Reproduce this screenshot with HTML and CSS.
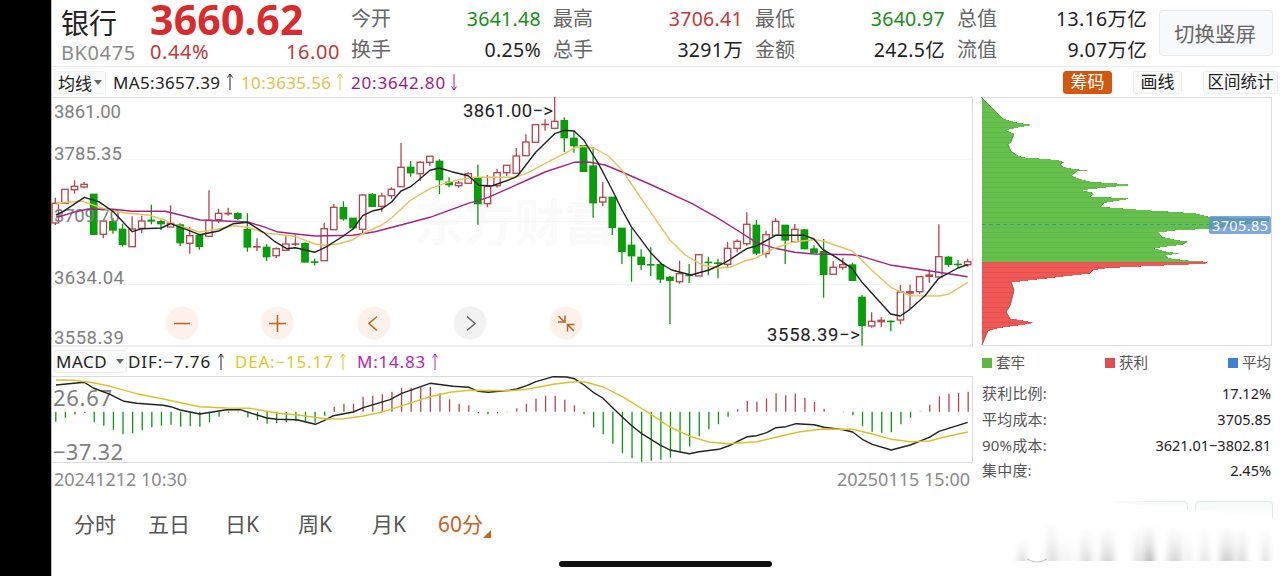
FILE: index.html
```
<!DOCTYPE html>
<html lang="zh-CN">
<head>
<meta charset="utf-8">
<title>银行 BK0475</title>
<link rel="stylesheet" href="styles.css">
</head>
<body>
<div class="app">

<header class="header">
	<div class="name">
		<div class="title">银行</div>
		<div class="code">BK0475</div>
	</div>
	<div class="price">
		<div class="last">3660.62</div>
		<div class="change"><span>0.44%</span><span>16.00</span></div>
	</div>
	<dl class="quotes">
		<div><dt>今开</dt><dd class="down">3641.48</dd></div>
		<div><dt>最高</dt><dd class="up">3706.41</dd></div>
		<div><dt>最低</dt><dd class="down">3640.97</dd></div>
		<div><dt>总值</dt><dd>13.16万亿</dd></div>
		<div><dt>换手</dt><dd>0.25%</dd></div>
		<div><dt>总手</dt><dd>3291万</dd></div>
		<div><dt>金额</dt><dd>242.5亿</dd></div>
		<div><dt>流值</dt><dd>9.07万亿</dd></div>
	</dl>
	<button class="rotate">切换竖屏</button>
</header>

<div class="toolbar">
	<div class="select ma-select">均线<i class="caret"></i></div>
	<div class="ma ma5"><span>MA5:3657.39</span><svg class="arrow" viewBox="0 0 8 18"><path d="M4 17V1M1.500 4.500L4 1L6.500 4.500"/></svg></div>
	<div class="ma ma10"><span>10:3635.56</span><svg class="arrow" viewBox="0 0 8 18"><path d="M4 17V1M1.500 4.500L4 1L6.500 4.500"/></svg></div>
	<div class="ma ma20"><span>20:3642.80</span><svg class="arrow" viewBox="0 0 8 18"><path d="M4 1V17M1.500 13.500L4 17L6.500 13.500"/></svg></div>
	<div class="tools">
		<button class="tool on">筹码</button>
		<button class="tool">画线</button>
		<button class="tool wide">区间统计</button>
	</div>
</div>

<div class="content">
	<div class="charts">
		<svg id="kline" class="kline" viewBox="52 96 922 251">
			<text class="watermark" x="414" y="241">东方财富</text>
			<path class="grid" d="M52 159.500H972M52 221.500H972M52 284.500H972"/>
			<path class="frame" d="M52 97.500H972.500V346H52"/>
			<g id="candles"></g>
			<g class="axis">
				<text x="54" y="117.500" textLength="67">3861.00</text>
				<text x="54" y="159.500" textLength="68">3785.35</text>
				<text x="54" y="221.500" textLength="66">3709.70</text>
				<text x="54" y="283.500" textLength="70">3634.04</text>
				<text x="54" y="343.500" textLength="70">3558.39</text>
			</g>
			<g id="averages"></g>
			<g class="mark">
				<text x="463" y="116.500" textLength="90">3861.00−&gt;</text>
				<text x="767" y="341" textLength="93">3558.39−&gt;</text>
			</g>
			<g class="ctl">
				<circle cx="182" cy="323" r="16.500"/><path d="M174 323.500h16"/>
				<circle cx="277.500" cy="323" r="16.500"/><path d="M269 323.500h17M277.500 315v17"/>
				<circle cx="374" cy="323" r="16.500"/><path d="M377 316.500l-8 7l8 7"/>
				<g class="off"><circle cx="470" cy="323" r="16.500"/><path d="M467 316.500l8 7l-8 7"/></g>
				<circle cx="566" cy="323" r="16.500"/><path d="M558.500 316l6 6M565 315.500v6.500h-7M574 331l-6-6M567.500 331.500v-7h7"/>
			</g>
		</svg>
		<div class="macd-bar">
			<div class="select macd-select">MACD<i class="caret"></i></div>
			<div class="ma dif"><span>DIF:−7.76</span><svg class="arrow" viewBox="0 0 8 18"><path d="M4 17V1M1.500 4.500L4 1L6.500 4.500"/></svg></div>
			<div class="ma dea"><span>DEA:−15.17</span><svg class="arrow" viewBox="0 0 8 18"><path d="M4 17V1M1.500 4.500L4 1L6.500 4.500"/></svg></div>
			<div class="ma m"><span>M:14.83</span><svg class="arrow" viewBox="0 0 8 18"><path d="M4 17V1M1.500 4.500L4 1L6.500 4.500"/></svg></div>
		</div>
		<svg id="macd" class="macd" viewBox="52 376 922 88">
			<path class="frame" d="M52 376.500H972.500V462.500H52"/>
			<g id="bars"></g>
			<g class="axis big">
				<text x="53" y="405.500" textLength="59">26.67</text>
				<text x="53" y="459.500" textLength="70">−37.32</text>
			</g>
			<g id="signals"></g>
		</svg>
		<div class="dates"><span>20241212 10:30</span><span>20250115 15:00</span></div>
	</div>

	<aside class="chips">
		<svg class="dist" viewBox="982 96 290 251">
			<path class="frame" d="M982 97.500H1271.500V345.500H982"/>
			<g id="dist"></g>
			<path class="avg" d="M982 224.500H1209"/>
			<rect class="tag" x="1209" y="216" width="62" height="18" rx="2"/>
			<text class="tagtext" x="1212" y="230.500" textLength="56">3705.85</text>
		</svg>
		<div class="legend">
			<span><i class="green"></i>套牢</span>
			<span><i class="red"></i>获利</span>
			<span><i class="blue"></i>平均</span>
		</div>
		<dl class="stats">
			<div><dt>获利比例:</dt><dd>17.12%</dd></div>
			<div><dt>平均成本:</dt><dd>3705.85</dd></div>
			<div><dt>90%成本:</dt><dd>3621.01−3802.81</dd></div>
			<div><dt>集中度:</dt><dd>2.45%</dd></div>
		</dl>
	</aside>
</div>

<footer class="footer">
	<nav class="tabs">
		<a>分时</a><a>五日</a><a>日K</a><a>周K</a><a>月K</a><a class="on">60分<i></i></a>
	</nav>
	<svg class="smudge" viewBox="1010 496 270 76">
		<defs>
			<filter id="soft" x="-60%" y="-20%" width="220%" height="140%"><feGaussianBlur stdDeviation="3 0.7"/></filter>
			<linearGradient id="fade" x1="0" y1="0" x2="0" y2="1">
				<stop offset="0" stop-color="#777" stop-opacity="0.02"/>
				<stop offset="0.5" stop-color="#777" stop-opacity="0.2"/>
				<stop offset="1" stop-color="#777" stop-opacity="0.5"/>
			</linearGradient>
			<linearGradient id="btn" x1="0" y1="0" x2="1" y2="0">
				<stop offset="0" stop-color="#e4e8e8" stop-opacity="0"/>
				<stop offset="1" stop-color="#e4e8e8"/>
			</linearGradient>
			<linearGradient id="btnfill" x1="0" y1="0" x2="0" y2="1">
				<stop offset="0" stop-color="#f6f9f9"/>
				<stop offset="1" stop-color="#fff"/>
			</linearGradient>
		</defs>
		<path fill="url(#btnfill)" stroke="url(#btn)" d="M1110 501.500H1184Q1187.500 501.500 1187.500 505V510"/>
		<path fill="url(#btnfill)" stroke="#e4e8e8" d="M1195.500 510V505Q1195.500 501.500 1199 501.500H1269Q1272.500 501.500 1272.500 505V518"/>
		<g id="smears"></g>
		<path fill="none" stroke="#888" stroke-opacity=".5" d="M1027 559q10 6 20 0"/>
	</svg>
	<div class="home"></div>
</footer>

</div>
<script src="chart.js"></script>
</body>
</html>
```
FILE: styles.css
```
* {
	box-sizing: border-box;
}
body {
	margin: 0px;
	background: #000;
	font-family: "Noto Sans", "Noto Sans CJK SC", sans-serif;
	color: #222;
	overflow: hidden;
}
dl, dd {
	margin: 0px;
}
button {
	font-family: inherit;
	padding: 0px;
}
svg {
	overflow: visible;
}
.app {
	margin-left: 51px;
	height: 576px;
	background: #fff;
	border-left: 1px solid #bbb;
}

/* quote header */
.header {
	display: flex;
	height: 67px;
	border-bottom: 1px solid #ececec;
}
.name {
	width: 98px;
	padding-left: 9px;
}
.title {
	margin-top: 5px;
	height: 36px;
	line-height: 36px;
	font-size: 28px;
}
.code {
	font-size: 20px;
	line-height: 24px;
	color: #8a8a8a;
	letter-spacing: 0.6px;
}
.price {
	width: 201px;
	color: #c4373b;
}
.last {
	height: 40px;
	line-height: 38px;
	font-size: 41px;
	font-weight: bold;
	letter-spacing: 0.2px;
	color: #dc2a2c;
}
.change {
	display: flex;
	justify-content: space-between;
	width: 190px;
	font-size: 20px;
	line-height: 24px;
	letter-spacing: 0.6px;
}
.quotes {
	display: grid;
	grid-template-columns: repeat(4, 190px);
	column-gap: 12px;
	grid-template-rows: 31px 31px;
	padding-top: 3px;
	font-size: 20px;
	line-height: 31px;
}
.quotes div {
	display: flex;
	justify-content: space-between;
}
.quotes dt {
	color: #666;
}
.quotes dd {
	font-size: 19.5px;
	letter-spacing: 0.3px;
}
.quotes .up {
	color: #c4373b;
}
.quotes .down {
	color: #169016;
}
.rotate {
	width: 114px;
	height: 46px;
	margin: 10px 0 0 12px;
	padding-right: 2px;
	border: 1px solid #e6eaec;
	border-radius: 4px;
	background: #f7f9fa;
	font-size: 20.5px;
	color: #666;
}

/* indicator bar */
.toolbar {
	display: flex;
	align-items: center;
	height: 29px;
	padding: 1px 2px 0;
}
.select {
	display: flex;
	align-items: center;
	justify-content: space-between;
	height: 23px;
	border: 1px solid #eee;
	border-radius: 3px;
	background: #fafbfb;
	font-size: 17px;
	padding: 0 3px;
}
.ma-select {
	width: 52px;
	margin-right: 7px;
}
.caret {
	border: 4px solid transparent;
	border-top: 5px solid #666;
	border-bottom: 0;
}
.ma {
	display: flex;
	align-items: center;
	justify-content: space-between;
	font-size: 17px;
	letter-spacing: 0.35px;
	white-space: nowrap;
}
.arrow {
	width: 8px;
	height: 18px;
	fill: none;
	stroke: currentColor;
	stroke-width: 1;
}
.ma5 {
	width: 121px;
	margin-right: 7px;
}
.ma10 {
	width: 103px;
	margin-right: 7px;
	color: #e3c04c;
}
.ma20 {
	width: 107px;
	color: #a0188c;
	letter-spacing: 0.8px;
}
.tools {
	display: flex;
	gap: 21px;
	margin-left: auto;
}
.tool {
	width: 49px;
	height: 23px;
	border: 1px solid #eceeee;
	border-radius: 3px;
	background: #fafbfb;
	font-size: 17px;
	line-height: 20px;
	color: #222;
}
.tool.wide {
	width: 75px;
	font-size: 16.5px;
}
.tool.on {
	background: #d2580f;
	border-color: #d2580f;
	color: #fff;
}

/* charts */
.content {
	display: flex;
	gap: 8px;
	height: 400px;
}
.charts {
	width: 922px;
}
.kline {
	display: block;
	width: 922px;
	height: 251px;
}
.frame {
	fill: none;
	stroke: #dcdcdc;
}
.grid {
	stroke: #f5f5f5;
}
.watermark {
	font-size: 50px;
	font-weight: bold;
	fill: #fafafa;
}
.axis, .mark {
	font-family: Roboto, sans-serif;
	font-size: 18.5px;
	fill: #808080;
}
.axis.big {
	font-family: "Noto Sans", sans-serif;
	font-size: 22px;
}
.mark {
	fill: #222;
}
.ctl circle {
	fill: #fdf1ea;
	stroke: none;
}
.ctl path {
	fill: none;
	stroke: #c0601c;
	stroke-width: 1.5;
}
.ctl .off circle {
	fill: #f2f2f2;
}
.ctl .off path {
	stroke: #666;
}
.up {
	fill: #fff;
	stroke: #b4444c;
	stroke-width: 1.3;
}
.down {
	fill: #08a008;
	stroke: #08980c;
	stroke-width: 1.3;
}
.line {
	fill: none;
	stroke-width: 1.4;
	stroke-linejoin: round;
}
.line.black {
	stroke: #222;
}
.line.yellow {
	stroke: #e8c25a;
}
.line.gold {
	stroke: #dcc02c;
}
.line.purple {
	stroke: #a42484;
}
.macd-bar {
	display: flex;
	align-items: center;
	height: 29px;
	padding-left: 2px;
}
.macd-select {
	width: 73px;
	margin-right: 1px;
	padding: 0 2px 0 1px;
	letter-spacing: 0.5px;
}
.dif {
	width: 97px;
	margin-right: 10px;
	letter-spacing: 0.9px;
}
.dea {
	width: 112px;
	margin-right: 10px;
	color: #dfc71f;
	letter-spacing: 0.8px;
}
.m {
	width: 82px;
	color: #b428b4;
	letter-spacing: 0.8px;
}
.macd {
	display: block;
	width: 922px;
	height: 88px;
}
.dates {
	display: flex;
	justify-content: space-between;
	padding: 3px 4px 0 2px;
	font-size: 18px;
	line-height: 25px;
	color: #8a8a8a;
}

/* cost distribution */
.chips {
	width: 290px;
}
.dist {
	display: block;
	width: 290px;
	height: 251px;
}
.avg {
	stroke: #3c9a8c;
	stroke-dasharray: 4 3;
}
.tag {
	fill: #5b8fd6;
	fill-opacity: 0.78;
}
.tagtext {
	font-size: 14.5px;
	fill: #fff;
}
.legend {
	display: flex;
	justify-content: space-between;
	height: 31px;
	line-height: 31px;
	padding-right: 1px;
	font-size: 14.5px;
	color: #555;
}
.legend i {
	display: inline-block;
	width: 10px;
	height: 10px;
	margin-right: 4px;
}
.legend .green {
	background: #5cb840;
}
.legend .red {
	background: #e04c50;
}
.legend .blue {
	background: #3c80d8;
}
.stats {
	padding: 3px 1px 0 0;
	font-size: 15px;
}
.stats div {
	display: flex;
	justify-content: space-between;
	height: 25.8px;
	line-height: 25.8px;
}
.stats dt {
	color: #555;
	letter-spacing: 0.2px;
}
.stats dd {
	font-size: 14.5px;
}

/* period tabs */
.footer {
	position: relative;
	display: flex;
	justify-content: space-between;
	height: 80px;
}
.tabs {
	display: flex;
	padding: 12px 0 0 22px;
	font-size: 21px;
	line-height: 32px;
	color: #555;
}
.tabs a {
	width: 74px;
}
.tabs a:nth-child(2) {
	width: 77px;
}
.tabs a:nth-child(3) {
	width: 73px;
}
.tabs a:nth-child(5) {
	width: 66px;
}
.tabs .on {
	color: #c8641c;
}
.tabs i {
	display: inline-block;
	border-left: 8px solid transparent;
	border-bottom: 8px solid #c8641c;
	vertical-align: -6px;
}
.smudge {
	width: 270px;
	height: 76px;
}
.home {
	position: absolute;
	left: 507px;
	bottom: 9px;
	width: 213px;
	height: 6px;
	border-radius: 3px;
	background: #111;
}
```
FILE: chart.js
```
"use strict";

var get = function(id) {
	return document.getElementById(id);
};
var X0 = 55.3;
var STEP = 9.604;

// r: rise, g: fall / high, body top, body bottom, low
var candles = [
	"r 197.7 203.3 223 225", "r 189.3 189.3 203.3 203.3", "r 180.3 186.3 189.7 193.7", "r 182 184.3 187 188.3",
	"g 194.3 194.3 234.3 234.3", "r 221 221 234.3 238.3", "g 217.7 221.7 230 233.7", "g 223.7 229.3 244.3 246.7",
	"r 216.3 229 246.7 246.7", "r 215.7 221 228.3 233", "g 204.7 220.3 221 224.3", "g 219.7 221.7 223.7 230",
	"r 205.3 223.3 227 227", "g 223.3 225 242.7 246", "r 227 235.7 243.3 253.7", "g 234 235.3 246.3 249.7",
	"r 190.3 220.3 236.3 236.3", "r 208.7 213.3 219.7 223.3", "r 207.7 213.3 213.8 215.7", "g 212.3 213.7 218.3 220.3",
	"g 213.3 229.7 247 251.7", "r 238.3 246.7 247 251", "g 244.3 247.3 256.7 261", "r 247.3 248.7 255.7 258",
	"r 236.3 244 250.3 250.3", "r 235 244 244.3 246", "g 242.3 243.7 262 262", "g 258.7 262 262.3 265.3",
	"r 223 228.7 260.7 260.7", "r 204 207.3 229.7 229.7", "g 201.3 207.7 218.7 220.7", "g 218.3 218.3 227.7 229.7",
	"r 194 195 229.3 233.3", "g 193 194.7 206.3 206.3", "r 192.7 196 206.3 211.7", "r 187.3 189.3 195.7 198.7",
	"r 143 167.3 186.7 186.7", "g 161 167.3 172.7 176.7", "r 161 162.3 173.7 181", "r 156.3 156.3 162.3 166.3",
	"g 159.3 161.3 179.7 194", "g 177.3 182.3 184.7 187.3", "r 181 183 185.7 187.7", "r 172.3 173.7 183.3 183.3",
	"g 164.7 177.7 203.7 224.7", "r 175 186.3 203.7 207.3", "r 168.7 172.7 185.7 187.7", "r 165.3 165.3 172.7 176",
	"r 148 156 173.3 173.3", "r 134.3 142 155.7 155.7", "r 124.7 124.7 142.3 142.3", "r 119.3 124.3 124.6 130.7",
	"r 97 121.3 128.3 128.3", "g 117.3 120.7 137.7 152", "g 130.7 138.3 145.7 152.7", "g 145.7 145.7 171.3 171.3",
	"g 147.3 166 202.7 217.7", "r 182 197.3 202 206", "g 197.3 197.3 227.3 235", "g 228.3 228.3 251.3 264",
	"g 228.3 245.3 255.7 281.7", "g 249.3 257.3 264.3 270", "g 247.3 264.7 265 276", "g 262.7 264.7 279 283",
	"g 276 277.3 280.3 324", "r 260.7 273.7 281.7 283.7", "g 264 275.3 275.6 283", "r 254.7 254.7 276 276",
	"g 256.7 262.3 262.6 275.3", "g 258.7 263 263.3 278.3", "r 241.7 248.3 264.3 267.3", "r 239.3 241.3 248.3 252.3",
	"r 212.3 224.3 243.7 245.7", "g 220 225.3 253 255", "r 230.7 234.7 253.7 257.7", "r 218 221.3 235.3 235.3",
	"g 225.3 225.3 240 264", "r 224 229.3 241.7 241.7", "g 229 230 248.7 248.7", "g 245.3 249 252.7 252.7",
	"g 239 251.7 274.3 297.7", "r 261 267.3 274.3 274.3", "r 258 264.7 267.3 269.7", "g 262.7 265 280.3 280.3",
	"g 295 297.3 325.3 345.7", "r 312.3 321.3 326 327.7", "r 317.3 320.3 321.7 327.3", "g 320.3 321.3 321.6 331.3",
	"r 285 292 320 324.3", "r 284.7 291.7 293 309", "r 276.7 276.7 291.7 293.7", "r 269.3 275 276.3 282.7",
	"r 224.3 256.7 277 277", "g 255.7 257.3 264.3 267", "g 260 264.3 264.6 267.7", "r 258.7 261.7 264.7 266.7"
];

var s = "";
candles.forEach(function(c, i) {
	var a = c.split(" ");
	var x = X0 + i * STEP;
	var high = +a[1], top = +a[2], bottom = +a[3], low = +a[4];
	s += "<g class='" + (a[0] == "r" ? "up" : "down") + "'>";
	s += "<path d='M" + x + " " + high + "V" + top + "M" + x + " " + bottom + "V" + low + "'/>";
	s += "<rect x='" + (x - 3.2) + "' y='" + top + "' width='6.4' height='" + (bottom - top) + "'/></g>";
});
get("candles").innerHTML = s;

var line = function(color, points) {
	return "<polyline class='line " + color + "' points='" + points + "'/>";
};
get("averages").innerHTML =
	line("purple", "56,217 60,216.500 73.3,212.3 88.3,209 113.3,209.3 132.3,211.3 165,211.3 180.3,215 200,220 247.7,222 263.3,226.7 276.7,231.7 298.3,234.3 315,236 353,235.3 375,231.7 401,225 430,217.3 468.3,203.3 487.7,197.7 514.7,185.7 525,181 545,172 574,162.3 588.3,162 605,165 622,172 651.7,185 691.7,203.3 718.3,218.3 744.7,235 756.3,242.3 775,248.3 794.7,252.3 814,254 852.3,254.7 861.7,256.3 891.7,265.3 938.7,272.3 967.7,276.7") +
	line("yellow", "56,204.500 60,203 81.7,201 100,207.3 113.3,211 124,212.7 150,215.3 165,220 170.7,223.3 199.7,232 218.7,229 233.3,225.7 247.7,227.3 266.7,233.3 283.3,235 295,236.3 315,244 326.7,245.3 338.3,243.7 353,239.7 362.7,233.7 381.7,225 391.3,218.3 410.7,200 430,188.7 441.7,184.3 458.3,179.7 475,177.3 514.7,177.3 526.7,173.3 554.7,158.3 565,153.3 574,148 583.7,146.3 595,148.7 608.3,156 622,170 631.3,184 650.7,212.3 670,240 685,255 701.7,264.7 718.3,268 730,267.3 744.7,261 755,258.3 775,248 794.7,241.7 814,239.7 823.3,241 852.3,251 871.7,270 890.7,287.3 910,295.7 938.7,296 948.3,294.3 967.7,282.3") +
	line("black", "56,215 63,211.7 84.3,197.3 98.7,201.7 113.3,211.7 132.3,231.7 142,228.7 161.3,228 170.7,223.7 199.7,234.7 218.7,231 233.3,223.7 247.7,222.3 263.3,232.3 275,241.7 286.7,248.7 295.3,247.7 314.7,252.3 326.7,246.7 343.3,236 353,229 362.7,215.7 373.3,210.7 381.7,209 391.3,202.3 401,191 410.7,186.7 430,170.3 439.3,168 451.7,171.7 468.3,175.7 479,185.3 491.7,186 514.7,177.7 517.7,175.7 535.7,152.3 554.7,133.7 564.3,130.3 574,131 583.7,140 598.3,163.3 612.3,190 622,210 631.3,226.7 650.7,252.7 661.7,264 671.7,270 691,275 709,270 725,262.7 746.7,248.7 756.3,246 775.7,235.3 804.3,235.3 814,239 822.3,249 835,256.7 852.3,268.7 862,282.3 890.7,314 900.3,316 910,309.3 925,295.7 938.7,278.3 958,268 967.7,264.7");

// MACD histogram
var bars = [
	-10, -6, -2.7, -1, -10.5, -14, -18, -22.5, -21.5, -18.5, -15.5, -14, -13, -15, -14.5, -15,
	-10.5, -5, -1, -0.5, -5.5, -8.5, -12, -11.5, -10.5, -9.5, -9.5, -11, -4, 5, 8, 8,
	15, 16, 17.5, 20, 24, 24, 24.5, 25, 18.5, 12.5, 8, 6.5, -1.5, -2.5, -1.5, -0.5,
	3.5, 8, 13, 16, 16, 12, 6.5, -2.5, -15.5, -22.5, -32, -41.5, -46.5, -50, -49, -48,
	-46, -40, -34.5, -24.5, -17.5, -12.5, -5, 2.5, 11, 10, 13.5, 18.5, 16.5, 18, 14, 10,
	3, 0, -0.5, -3.5, -14.5, -20, -21, -20.5, -12.5, -6, 0.5, 7, 15.5, 18, 19, 20
];
get("bars").innerHTML = bars.map(function(v, i) {
	return "<path class='" + (v > 0 ? "up" : "down") + "' d='M" + (X0 + i * STEP + 0.5) + " 411.8v" + (-v) + "'/>";
}).join("");

get("signals").innerHTML =
	line("black", "56,385 84.3,382.3 93.3,388 110,394.3 124,401.3 136.7,403.3 163.3,405.3 170.7,406.7 180.3,410 199.7,414 226.7,409.7 240,409.7 266.7,418 276.7,419.3 296.7,419.7 315.3,424.3 324,420.7 333.3,415.7 353.3,412 363.3,407.7 390,399.7 401.7,393.3 430,383.3 453.3,386.3 469,387.3 478.3,391.3 488.3,392.3 510,390.3 516.7,389 526.7,385.7 536,381.7 553.3,376.7 566.7,377 574.3,378.7 584,385 593.3,392.3 602.7,398 612.7,407.7 622.3,417 632,426 641.3,433.3 660.7,445.3 670,450 689.3,453.7 699,451.7 718.7,449.3 728.3,446 747.3,436.7 756.7,435.7 766.7,432.7 776,427.7 786,426.7 796,423.7 814,424.7 824,427.3 843.3,429.7 852.7,432 862.3,439.3 872.3,444.3 891.3,450 910.3,445 929.3,437.3 939,431.3 967.7,422.3") +
	line("gold", "56,380 73.3,380.3 93.3,382.7 110,386.3 136.7,393.7 163.3,399 199.7,406.7 226.7,408 250,408.3 276.7,413 300,415.3 326.7,419 343.3,418.7 363.3,416 383.3,411.7 403.3,405.3 430,396.7 450,392.3 469,390.3 510,390.7 526.7,389.3 553.3,384.3 574.3,381.7 584,381.7 603.3,387 622.3,396.7 650,413.7 670,427 690,436.3 708.7,442 728.3,443.7 756.7,441.7 776.7,437 800,431.7 823.3,429 852.7,429.3 872.3,434 891.3,439.3 910.3,441.7 929.3,441 943.3,437.3 967.7,432");

// cost distribution: [width, y] turning points, in thirds of a pixel
var green = [[1,16],[59,75],[67,80],[84,85],[109,91],[142,96],[142,100],[117,103],[104,106],[71,113],[87,120],[97,124],[87,150],[79,155],[87,175],[109,190],[129,195],[184,199],[227,203],[246,209],[236,215],[245,224],[279,230],[314,233],[314,235],[284,237],[269,250],[294,260],[327,268],[404,273],[437,276],[437,279],[389,283],[299,293],[329,300],[334,306],[327,312],[387,315],[437,318],[437,320],[399,326],[367,331],[357,343],[409,347],[487,353],[576,358],[641,363],[669,370],[682,373],[740,375],[860,377],[860,388],[760,400],[682,410],[594,412],[529,420],[541,433],[584,443],[615,446],[615,449],[601,457],[544,463],[519,468],[554,478],[589,482],[589,484],[549,488],[559,497],[619,504],[677,508]];
var red = [[677,509],[669,514],[569,518],[454,523],[374,527],[334,533],[324,543],[289,547],[244,552],[194,558],[154,562],[89,570],[97,593],[85,640],[73,658],[85,678],[129,685],[151,690],[151,692],[124,697],[84,702],[49,707],[19,715],[1,757]];
var rows = function(pts, colors, edge) {
	var res = "";
	var k = 0;
	var y0 = Math.round(pts[0][1] / 3);
	for (var y = y0; y * 3 <= pts[pts.length - 1][1]; y++) {
		while (k < pts.length - 2 && pts[k + 1][1] < y * 3) k++;
		var a = pts[k], b = pts[k + 1];
		var t = Math.max(0, Math.min(1, (y * 3 - a[1]) / (b[1] - a[1])));
		var w = (a[0] + (b[0] - a[0]) * t) / 3;
		res += "<rect x='982' y='" + (92 + y) + "' width='" + w.toFixed(1) + "' height='1' fill='" + colors[y % 5 == 0 ? 1 : 0] + "'/>";
		res += "<rect x='" + (982 + w - 1).toFixed(1) + "' y='" + (92 + y) + "' width='1' height='1' fill='" + edge + "'/>";
	}
	return res;
};
get("dist").innerHTML = rows(green, ["#65c04e", "#5cb848"], "#5a9a48") + rows(red, ["#ef5854", "#e45050"], "#b85450");

// x, top, width, opacity
var smears = [[1018,540,9,0.5],[1047,522,9,0.5],[1054,534,20,0.15],[1080,530,12,0.5],[1101,528,13,0.6],[1134,528,8,0.5],[1144,526,10,1.1],[1168,528,14,0.6],[1187,530,4,0.4],[1200,528,9,0.4],[1220,528,14,0.7],[1238,528,8,0.6],[1262,528,7,0.5]];
get("smears").innerHTML = smears.map(function(a) {
	return "<rect x='" + a[0] + "' y='" + a[1] + "' width='" + a[2] + "' height='" + (561 - a[1]) + "' fill='url(#fade)' opacity='" + a[3] + "' filter='url(#soft)'/>";
}).join("");
```
